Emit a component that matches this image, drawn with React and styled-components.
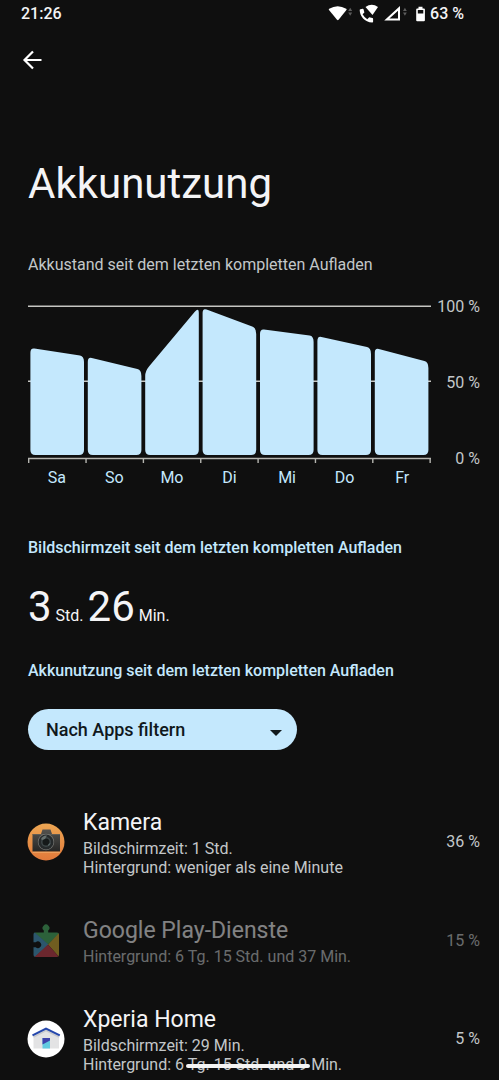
import React, { useState } from 'react'
import styled, { createGlobalStyle } from 'styled-components'

const GlobalStyle = createGlobalStyle`
*{
box-sizing:border-box;
}
body{
margin:0;
background:#0f0f0f;
color:#f4f4f6;
font-family:Roboto,"Noto Sans",sans-serif;
}
h1,h2,p,ul{
margin:0;
padding:0;
}
`;
const Page = styled.div`
height:100vh;
overflow:hidden;
`;
const StatusBar = styled.header`
display:flex;
align-items:center;
justify-content:space-between;
height:28px;
padding:0 35px 0 21px;
font-size:16px;
font-weight:500;
line-height:28px;
`;
const StatusIcons = styled.div`
display:flex;
align-items:center;
`;
const StatusSvg = styled.svg`
display:block;
width:86px;
height:20px;
margin-right:2px;
`;
const Battery = styled.svg`
display:block;
width:10px;
height:16px;
margin-right:4px;
`;
const Toolbar = styled.nav`
display:flex;
align-items:center;
height:64px;
padding:0 20px;
`;
const BackButton = styled.button`
display:flex;
align-items:center;
justify-content:center;
width:24px;
height:24px;
padding:0;
border:0;
background:none;
color:#fff;
cursor:pointer;
`;
const Main = styled.main`
padding:67px 19px 0 28px;
`;
const Title = styled.h1`
font-size:42px;
font-weight:400;
line-height:50px;
`;
const ChartTitle = styled.p`
margin-top:46px;
font-size:16px;
line-height:20px;
color:#c3c7c9;
`;
const Chart = styled.section`
display:grid;
grid-template-columns:1fr 49px;
margin-top:30px;
`;
const Plot = styled.svg`
display:block;
width:100%;
height:160px;
`;
const Scale = styled.div`
display:flex;
flex-direction:column;
justify-content:space-between;
height:172px;
margin-top:-8px;
text-align:right;
font-size:16px;
line-height:20px;
color:#c3c7c9;
`;
const Days = styled.div`
display:grid;
grid-template-columns:repeat(7,1fr);
margin-top:-1px;
text-align:center;
font-size:16px;
line-height:20px;
color:#c4e8fd;
`;
const Heading = styled.h2`
margin-top:${({$gap})=>$gap};
font-size:16px;
font-weight:500;
line-height:20px;
color:#c4e8fd;
`;
const ScreenTime = styled.p`
margin-top:24px;
font-size:16px;
line-height:50px;
white-space:nowrap;
`;
const Big = styled.span`
font-size:42px;
`;
const Filter = styled.div`
position:relative;
width:269px;
margin-top:28px;
`;
const Select = styled.select`
display:block;
width:100%;
height:41px;
padding:0 44px 0 18px;
border:0;
border-radius:21px;
appearance:none;
background:#c4e8fd;
color:#10181c;
font-family:inherit;
font-size:18px;
font-weight:500;
`;
const Caret = styled.svg`
position:absolute;
right:15px;
top:21px;
width:12px;
height:6px;
pointer-events:none;
`;
const List = styled.ul`
margin-top:57px;
list-style:none;
`;
const Row = styled.li`
display:flex;
align-items:center;
margin-bottom:38px;
opacity:${({$dimmed})=>$dimmed ? 0.5 : 1};
`;
const AppIcon = styled.svg`
flex:none;
width:38px;
height:38px;
margin-right:17px;
overflow:visible;
`;
const Details = styled.div`
flex:1;
`;
const Name = styled.p`
font-size:23px;
line-height:32px;
`;
const Info = styled.p`
font-size:16px;
line-height:19px;
color:#c3c7c9;
`;
const Percent = styled.span`
font-size:16px;
line-height:20px;
color:#c3c7c9;
`;
const HomeHandle = styled.div`
position:fixed;
left:50%;
bottom:12px;
width:124px;
height:4px;
margin-left:-64px;
border-radius:2px;
background:#f4f4f4;
`;

// top edge of every bar, left and right, measured from the top of the plot
const days = [
  { name: 'Sa', left: 43, right: 51 },
  { name: 'So', left: 52, right: 65 },
  { name: 'Mo', left: 66, right: 2 },
  { name: 'Di', left: 3, right: 23 },
  { name: 'Mi', left: 24, right: 31 },
  { name: 'Do', left: 31, right: 43 },
  { name: 'Fr', left: 43, right: 57 },
];

function barPath(i, left, right) {
  const x = 2.4 + i * 57.4;
  const w = 53.6;
  const bottom = 150;
  const slope = (right - left) / w;
  const r = 5;
  const rl = 4;
  return `M${x} ${left + r}Q${x} ${left} ${x + rl} ${left + slope * rl}` +
    `L${x + w - rl} ${right - slope * rl}Q${x + w} ${right} ${x + w} ${right + r + 1}` +
    `V${bottom - r}Q${x + w} ${bottom} ${x + w - r} ${bottom}H${x + r}Q${x} ${bottom} ${x} ${bottom - r}Z`;
}

function BatteryChart() {
  return (
    <Chart>
      <Plot viewBox="0 0 403 160" preserveAspectRatio="none" aria-hidden="true">
        <path d="M0 1.200H403M0 76.200H403" stroke="#c6c6c2" strokeWidth="1.600" />
        {days.map((d, i) => (
          <path key={d.name} d={barPath(i, d.left, d.right)} fill="#c4e8fd" />
        ))}
        <path d="M0 153.500H403" stroke="#b5b5b0" strokeWidth="1.600" />
        {[0, 1, 2, 3, 4, 5, 6, 7].map((i) => (
          <path key={i} d={`M${0.7 + i * 57.35} 153V158`} stroke="#b5b5b0" strokeWidth="1.400" />
        ))}
      </Plot>
      <Scale>
        <span>100 %</span>
        <span>50 %</span>
        <span>0 %</span>
      </Scale>
      <Days>
        {days.map((d) => <span key={d.name}>{d.name}</span>)}
      </Days>
    </Chart>
  )
}

function CameraIcon() {
  return (
    <AppIcon viewBox="0 0 38 38" aria-hidden="true">
      <defs>
        <linearGradient id="cam" x1="0" y1="0" x2="0" y2="1">
          <stop offset="0" stopColor="#eda653" />
          <stop offset="1" stopColor="#e1793a" />
        </linearGradient>
        <linearGradient id="body" x1="0" y1="0" x2="0" y2="1">
          <stop offset="0" stopColor="#55534f" />
          <stop offset="1" stopColor="#262625" />
        </linearGradient>
      </defs>
      <circle cx="18" cy="19" r="18.500" fill="url(#cam)" />
      <path d="M13 11l1.500-4.500h8L24 11h8v17.500H4.500V11z" fill="url(#body)" />
      <path d="M4.500 11.500h27.500" stroke="#69655d" strokeWidth=".7" />
      <path d="M4.500 29.300h27.500" stroke="#f2b16f" strokeWidth=".8" />
      <circle cx="18" cy="19" r="8.200" fill="#777774" />
      <circle cx="18" cy="19" r="7.500" fill="#262a2b" />
      <circle cx="18" cy="19" r="5" fill="#3d4647" />
      <circle cx="18" cy="19" r="3.500" fill="#151919" />
      <path d="M13 16q2-4 6-3.500l-2 3.500-3 1z" fill="#66706f" />
      <path d="M20 23q2-1 2.500-3l-2 1z" fill="#607070" />
    </AppIcon>
  )
}

function PlayIcon() {
  return (
    <AppIcon viewBox="0 0 38 38" aria-hidden="true">
      <defs>
        <clipPath id="puzzle">
          <path d="M7 10.500h8.800V8.600a3.400 3.400 0 1 1 4.400 0v1.900H29q2 0 2 2V33q0 2-2 2H7.500q-2 0-2-2v-7.700h2.200a3.300 3.300 0 1 0 0-5H5.500v-7.800q0-2 1.500-2z" />
        </clipPath>
      </defs>
      <g clipPath="url(#puzzle)">
        <path d="M0 0h38v5L20 22.500 5.500 10z" fill="#49b265" />
        <path d="M5 9l15.500 13.500L5 37z" fill="#4a9dca" />
        <path d="M31.500 10.500v25L20 22.500z" fill="#d0aa32" />
        <path d="M5.500 36L20 22.500 32 36z" fill="#c6404d" />
      </g>
    </AppIcon>
  )
}

function HomeIcon() {
  return (
    <AppIcon viewBox="0 0 38 38" aria-hidden="true">
      <circle cx="18" cy="19" r="18.500" fill="#fff" />
      <path d="M5.500 15L18 8.500 31 15v13.500H5.500z" fill="#e3e3e4" />
      <path d="M5.500 17L18 10.500 31 17" fill="none" stroke="#c9cacd" strokeWidth="1.500" />
      <path d="M4.500 15.300L18 8.500l13.800 6.800" fill="none" stroke="#2547ac" strokeWidth="2" />
      <path d="M14.500 18H22v10.500h-7.500z" fill="#62cbe0" />
      <path d="M14.500 18H22v2.500l-7.500 4z" fill="#3e42ac" />
    </AppIcon>
  )
}

const apps = [
  { name: 'Kamera', icon: CameraIcon, info: ['Bildschirmzeit: 1 Std.', 'Hintergrund: weniger als eine Minute'], percent: 36 },
  { name: 'Google Play-Dienste', icon: PlayIcon, info: ['Hintergrund: 6 Tg. 15 Std. und 37 Min.'], percent: 15, dimmed: true },
  { name: 'Xperia Home', icon: HomeIcon, info: ['Bildschirmzeit: 29 Min.', 'Hintergrund: 6 Tg. 15 Std. und 9 Min.'], percent: 5 },
];

export default function App() {
  const [filter, setFilter] = useState('apps');

  return (
    <Page>
      <GlobalStyle />
      <StatusBar>
        <span>21:26</span>
        <StatusIcons>
          <StatusSvg viewBox="0 0 86 20" fill="#fff" aria-hidden="true">
            <path d="M1.200 4.800q8.500-5.200 17 0 .7.500.2 1.200l-7.800 9.700q-.8.900-1.600 0L1 6q-.5-.7.200-1.200z" />
            <path d="M20.200 7l2-3.300 2 3.300zM20.200 8.500l2 3.300 2-3.300z" fill="#5d5d5d" />
            <path d="M37.500 3q6.200-4.500 12.500 0L44.500 11z" />
            <path d="M32.500 5.200l2.200-.4q.7-.1.900.600l.8 3.200-1.800 1.700q1.700 3.200 4.700 4.900l1.900-1.900 3.200.8q.7.200.7.900v2.700q0 .8-.8.800C36.500 18.300 31.800 12 31.700 6q0-.7.8-.8z" />
            <path d="M58.800 15.600L71 4.400v11.200z" fill="none" stroke="#fff" strokeWidth="2" />
            <path d="M75 7l1.900-3.300L78.800 7zM75 8.500l1.900 3.300 1.900-3.300z" fill="#5d5d5d" />
          </StatusSvg>
          <Battery viewBox="0 0 10 16" aria-hidden="true">
            <path d="M2.500.8h4v1.700h1.400q1 0 1 1v10.700q0 1-1 1H1.200q-1 0-1-1V3.500q0-1 1-1h1.300z" fill="#fff" />
            <path d="M1.800 4h5.500v3.500H1.800z" fill="#0f0f0f" />
          </Battery>
          <span>63 %</span>
        </StatusIcons>
      </StatusBar>
      <Toolbar>
        <BackButton type="button" aria-label="Zurück">
          <svg width="24" height="24" viewBox="0 0 24 24" fill="none" stroke="currentColor" strokeWidth="2.200">
            <path d="M21.500 12H5M13 3.500L4.500 12l8.500 8.500" />
          </svg>
        </BackButton>
      </Toolbar>
      <Main>
        <Title>Akkunutzung</Title>
        <ChartTitle>Akkustand seit dem letzten kompletten Aufladen</ChartTitle>
        <BatteryChart />
        <Heading $gap="50px">Bildschirmzeit seit dem letzten kompletten Aufladen</Heading>
        <ScreenTime><Big>3</Big> Std. <Big>26</Big> Min.</ScreenTime>
        <Heading $gap="20px">Akkunutzung seit dem letzten kompletten Aufladen</Heading>
        <Filter>
          <Select aria-label="Filter" value={filter} onChange={(e) => setFilter(e.target.value)}>
            <option value="apps">Nach Apps filtern</option>
          </Select>
          <Caret viewBox="0 0 12 6" aria-hidden="true"><path d="M0 0h12L6 6z" fill="#10181c" /></Caret>
        </Filter>
        <List>
          {apps.map(({ name, icon: Icon, info, percent, dimmed }) => (
            <Row key={name} $dimmed={dimmed}>
              <Icon />
              <Details>
                <Name>{name}</Name>
                {info.map((line) => <Info key={line}>{line}</Info>)}
              </Details>
              <Percent>{percent} %</Percent>
            </Row>
          ))}
        </List>
      </Main>
      <HomeHandle />
    </Page>
  )
}
